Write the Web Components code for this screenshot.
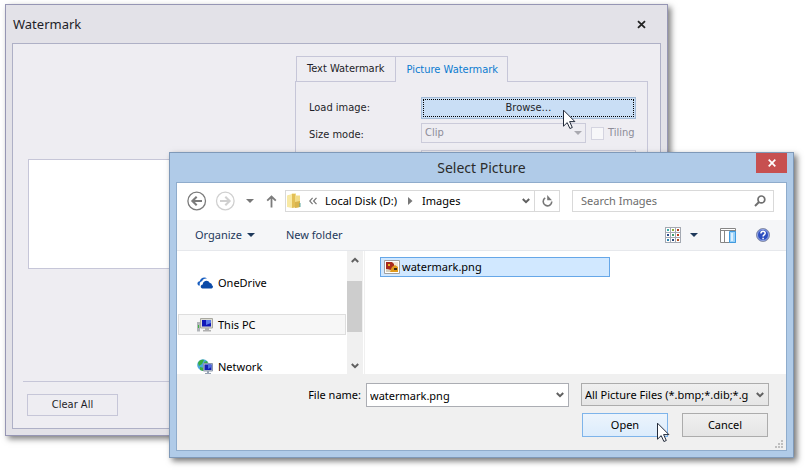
<!DOCTYPE html>
<html lang="en">
<head>
<meta charset="utf-8">
<title>Watermark</title>
<style>
  html, body { margin: 0; height: 100%; background: #fff; overflow: hidden; }
  body { position: relative; color: #000; font: 11px/16px "Noto Sans", "Open Sans", sans-serif; }
  watermark-window { position: absolute; inset: 4px 137px 34px 5px; }
  picture-dialog { position: absolute; inset: 152px 11px 12px 169px; }
  mouse-pointer.browse { left: 563px; top: 109px; }
  mouse-pointer.open { left: 657px; top: 422px; }
</style>
</head>
<body>
<watermark-window>
  <span slot="title">Watermark</span>
</watermark-window>
<mouse-pointer class="browse"></mouse-pointer>
<picture-dialog>
  <span slot="title">Select Picture</span>
</picture-dialog>
<mouse-pointer class="open"></mouse-pointer>

<script>
const base = `
  * { box-sizing: border-box; }
  button, input, select { font: inherit; color: inherit; margin: 0; padding: 0; border: 0; background: none; border-radius: 0; outline: 0; appearance: none; min-width: 0; }
  svg { display: block; flex: none; }
`;
function define(name, css, html) {
  const t = document.createElement('template');
  t.innerHTML = `<style>${base}${css}</style>${html}`;
  customElements.define(name, class extends HTMLElement {
    constructor() {
      super();
      this.attachShadow({ mode: 'open' }).append(t.content.cloneNode(true));
    }
  });
}

/* Arrow cursor drawn over the windows */
define('mouse-pointer', `:host { position: absolute; display: block; pointer-events: none; }`,
`<svg width="13" height="21" viewBox="0 0 13 21"><path d="M.5 1.2v16l3.7-3.6 2.7 5.9 2.4-1-2.7-5.9h5.3z" fill="#fff" stroke="#222a3a"/></svg>`);

/* Thin downward chevron of scroll bars and combo boxes; "up" flips it */
define('chevron-icon', `:host { display: block; color: #606060; } :host([up]) svg { transform: scaleY(-1); }`,
`<svg width="8" height="6" viewBox="0 0 8 6"><path d="M.8 1 4 4.2 7.2 1" fill="none" stroke="currentColor" stroke-width="2"/></svg>`);

/* Solid drop-down triangle */
define('drop-icon', `:host { display: block; }`,
`<svg width="8" height="4" viewBox="0 0 8 4"><path d="M0 0h8L4 4z" fill="currentColor"/></svg>`);

/* Tab page with its two tabs */
define('tab-box', `
  :host { display: flex; flex-direction: column; }
  .tabs { display: flex; margin-left: 1px; position: relative; z-index: 1; }
  .tabs button { height: 25px; padding: 0 11px 0 10px; border: 1px solid #c6c6d8; border-width: 1px 0 0 1px; }
  .tabs button[aria-selected=true] { height: 26px; padding: 0 9px 0 10px; border-right-width: 1px; color: #0a7bd0; background: #eeedf2; margin-bottom: -1px; }
  .page { flex: 1; border: 1px solid #c6c6d8; padding: 15px 11px 11px 13px; }`,
`<div class="tabs" role="tablist">
  <button role="tab" aria-selected="false">Text Watermark</button><button role="tab" aria-selected="true">Picture Watermark</button>
</div>
<div class="page" role="tabpanel"><slot></slot></div>`);

define('watermark-form', `
  :host { display: grid; grid-template-columns: 112px 1fr; grid-template-rows: 22px 23px 20px; row-gap: 4px; color: #1e1e28; }
  label { align-self: center; }
  .browse { background: #c9def5; border: 1px solid #a4bbd6; outline: 1px dotted #000; outline-offset: -3px; }
  .size { display: flex; gap: 5px; align-items: start; color: #8c8c98; }
  .pick { flex: 1; display: grid; align-items: center; }
  .pick > * { grid-area: 1 / 1; }
  .pick select { height: 20px; border: 1px solid #cbcbda; padding: 0 18px 0 3px; opacity: 1; color: #8c8c98; }
  .pick drop-icon { justify-self: end; margin-right: 4px; color: #a9a9b0; }
  .tile { display: flex; gap: 4px; align-items: center; height: 20px; width: 45px; }
  .tile input { flex: none; width: 13px; height: 13px; background: #f7f7f9; border: 1px solid #d4d4e0; }
  .extra { height: 20px; border: 1px solid #cbcbda; grid-column: 2; }`,
`<label for="b">Load image:</label><button id="b" class="browse">Browse…</button>
<label for="s">Size mode:</label>
<div class="size">
  <div class="pick"><select id="s" disabled><option>Clip</option></select><drop-icon></drop-icon></div>
  <div class="tile"><input type="checkbox" id="t" disabled><label for="t">Tiling</label></div>
</div>
<input class="extra" disabled aria-label="Alignment">`);

define('watermark-window', `
  :host { display: flex; flex-direction: column; background: #e3e2e8; border: 1px solid #9696b4; padding: 0 6px 6px; box-shadow: 3px 3px 6px rgba(0,0,0,.5); color: #1e1e28; font-family: "DejaVu Sans Condensed", "DejaVu Sans", sans-serif; }
  header { display: flex; align-items: center; justify-content: space-between; height: 38px; font: 13px/20px "Noto Sans", sans-serif; padding: 0 15px 0 1px; }
  .panel { flex: 1; min-height: 0; display: flex; flex-direction: column; background: #eeedf2; border: 1px solid #aeb0c6; padding: 12px 12px 0 10px; }
  .body { flex: 1; min-height: 0; display: flex; padding-bottom: 9px; }
  .view { flex: 0 0 272px; align-self: center; padding: 0 5px; }
  .sheet { height: 110px; background: #fff; border: 1px solid #c6c6d8; }
  tab-box { flex: 1; }
  footer { border-top: 1px solid #c6c6d8; padding: 12px 4px; }
  footer button { width: 91px; height: 22px; border: 1px solid #c6c6d8; display: block; }`,
`<header><slot name="title"></slot>
  <button aria-label="Close"><svg width="9" height="9" viewBox="0 0 9 9"><path d="M1 1.2 8 7.8M8 1.2 1 7.8" stroke="#222" stroke-width="1.8"/></svg></button>
</header>
<div class="panel">
  <div class="body">
    <div class="view"><div class="sheet"></div></div>
    <tab-box><watermark-form></watermark-form></tab-box>
  </div>
  <footer><button>Clear All</button></footer>
</div>`);

define('address-bar', `
  :host { display: flex; align-items: center; gap: 8px; height: 37px; padding: 0 12px 1px 10px; background: #fff; color: #000; }
  button { display: grid; place-items: center; height: 20px; }
  .round { width: 20px; } .small { width: 13px; }
  .small svg { overflow: visible; }
  .path { flex: 1; display: flex; align-items: center; gap: 8px; height: 22px; border: 1px solid #d9d9d9; padding-left: 1px; }
  .path .open { margin-left: auto; margin-right: -4px; }
  .path .reload { width: 25px; border-left: 1px solid #d9d9d9; }
  .find { flex: 0 0 202px; margin-left: 4px; display: flex; align-items: center; height: 22px; border: 1px solid #d9d9d9; padding: 0 7px 0 8px; }
  .find input { flex: 1; }
  input::placeholder { color: #6d6d6d; opacity: 1; }`,
`<button class="round" aria-label="Back"><svg width="20" height="20" viewBox="0 0 20 20" fill="none" stroke="#7b7b7b"><circle cx="9.7" cy="10" r="8.8" stroke-width="1.3"/><path d="M15 10H6M9.7 5.8 5.4 10l4.3 4.2" stroke-width="2.1"/></svg></button>
<button class="round" aria-label="Forward" disabled><svg width="20" height="20" viewBox="0 0 20 20" fill="none" stroke="#d0d0d0"><circle cx="10.3" cy="10" r="8.8" stroke-width="1.3"/><path d="M5 10h9M10.3 5.8l4.3 4.2-4.3 4.2" stroke-width="2.1"/></svg></button>
<button class="small" aria-label="Recent" style="color:#777"><drop-icon></drop-icon></button>
<button class="small" aria-label="Up"><svg width="11" height="13" viewBox="0 0 11 13" fill="none" stroke="#7c7c7c" stroke-width="1.8"><path d="M6.500 12.500V2M2.200 5.700 6.500 1.500 10.800 5.700"/></svg></button>
<div class="path">
  <svg width="14" height="16" viewBox="0 0 14 16"><path d="M1 2h3l1-1.500h4V14H1z" fill="#efd77c"/><path d="M0 2.500 5 1v14l-5-1z" fill="#f8e9a4"/><path d="M5 1h3v13.500l-3 .5z" fill="#e3bf56"/><path d="M8 2.500h5V14l-5 1z" fill="#f2dc88"/><path d="M8 9l5-1v6l-5 1z" fill="#d9b44c"/><path d="M13 10v4" stroke="#5ba7a0"/></svg>
  <svg width="8" height="8" viewBox="0 0 8 8" fill="none" stroke="#777" stroke-width="1.200"><path d="M3.600.8.700 4l2.900 3.200M7.500.8 4.600 4l2.900 3.200"/></svg>
  <button>Local Disk (D:)</button>
  <svg width="9" height="8" viewBox="0 0 9 8"><path d="M3 0l4.500 4L3 8z" fill="#777"/></svg>
  <button>Images</button>
  <button class="open" aria-label="Previous locations"><chevron-icon></chevron-icon></button>
  <button class="reload" aria-label="Refresh"><svg width="11" height="12" viewBox="0 0 11 12"><path d="M3.200 2.900A4.300 4.300 0 1 0 9.800 6.500" fill="none" stroke="#777" stroke-width="1.600"/><path d="M5.200 0v5.200H10L8.300 3.500z" fill="#777"/></svg></button>
</div>
<div class="find"><input type="search" placeholder="Search Images" aria-label="Search Images">
  <svg width="12" height="12" viewBox="0 0 12 12" fill="none" stroke="#6f6f6f"><circle cx="7.400" cy="4.400" r="3.400" stroke-width="1.700"/><path d="M5 7 1 11" stroke-width="2"/></svg></div>`);

define('command-bar', `
  :host { display: flex; align-items: center; height: 31px; padding: 0 16px 0 18px; background: #f5f6f8; border-bottom: 1px solid #e6e8ec; color: #1e395b; }
  button { display: flex; align-items: center; gap: 5px; height: 28px; }
  .new { margin-left: 31px; margin-right: auto; }
  .drop { margin: 0 22px 0 9px; }
  .help { margin-left: 20px; }`,
`<button>Organize <drop-icon></drop-icon></button>
<button class="new">New folder</button>
<button aria-label="Change view"><svg width="16" height="16" viewBox="0 0 16 16">
  <path d="M0 0h16v16H0z" fill="#a4a9b2"/>
  <path d="M1 1h4v4H1zM6 1h4v4H6zM11 1h4v4h-4zM1 6h4v4H1zM6 6h4v4H6zM11 6h4v4h-4zM1 11h4v4H1zM6 11h4v4H6zM11 11h4v4h-4z" fill="#fff"/>
  <path d="M2 2h2v2H2z" fill="#3caaa8"/><path d="M7 2h2v2H7z" fill="#8fae3c"/><path d="M12 2h2v2h-2z" fill="#b04020"/>
  <path d="M2 7h2v2H2z" fill="#2c4c8c"/><path d="M7 7h2v2H7z" fill="#3c9c6c"/><path d="M12 7h2v2h-2z" fill="#b8401c"/>
  <path d="M2 12h2v2H2z" fill="#2c84b0"/><path d="M7 12h2v2H7z" fill="#284878"/><path d="M12 12h2v2h-2z" fill="#b05020"/></svg></button>
<button class="drop" aria-label="More views"><drop-icon></drop-icon></button>
<button aria-label="Preview pane"><svg width="16" height="15" viewBox="0 0 16 15"><path d="M.5.5h15v14H.5z" fill="#fff" stroke="#868686"/><path d="M0 2.500h16M4.500 3v12" stroke="#868686"/><path d="M9.500 3.500h6v11h-6z" fill="#9cd2f8" stroke="#3f9be0"/><path d="M11 5h2v8h-2z" fill="#dcf0fe"/></svg></button>
<button class="help" aria-label="Help"><svg width="14" height="14" viewBox="0 0 14 14"><circle cx="7" cy="7" r="6.500" fill="#2d4fc0" stroke="#8d93a6"/><circle cx="7" cy="7" r="5.500" fill="none" stroke="#b4c2ee" stroke-width=".800"/><path d="M4.900 5.600c0-3 4.400-2.900 4.300-.3C9.200 6.900 7.100 6.800 7.100 8.500M7.100 9.700v1.500" fill="none" stroke="#fff" stroke-width="1.500"/></svg></button>`);

define('place-item', `
  :host { display: flex; align-items: center; gap: 5px; flex: none; height: 21px; margin: 0 1px; padding-left: 18px; border: 1px solid transparent; }
  :host([current]) { background: #f7f7f7; border-color: #dedede; }
  ::slotted(svg) { display: block; }`,
`<slot name="icon"></slot><slot></slot>`);

define('scroll-strip', `
  :host { display: flex; flex-direction: column; align-items: center; width: 16px; background: #f0f0f0; padding: 6px 0 5px; }
  .thumb { width: 15px; height: 51px; margin: 18px 1px 0 0; background: #cdcdcd; }
  .down { margin-top: auto; }`,
`<chevron-icon up></chevron-icon><div class="thumb"></div><chevron-icon class="down"></chevron-icon>`);

define('file-item', `
  :host { display: flex; align-items: center; gap: 2px; width: 230px; height: 20px; padding-left: 3px; background: #d1e8ff; border: 1px solid #66a7e8; }`,
`<svg width="16" height="14" viewBox="0 0 16 14"><path d="M.5.5h15v13H.5z" fill="#fff" stroke="#a0a0a0"/><path d="M2 2h12v10H2z" fill="#f0e4d4"/><path d="M2 2h6l2 2v4l-3 2-5-1z" fill="#a92a1c"/><path d="M4 4h2v2H4z" fill="#e8b428"/><path d="M8 7l3-2 3 2v5H6l1-3z" fill="#e09a1c"/><path d="M10 8h3v2h-3z" fill="#3c2a14"/><path d="M2 9l4 1v2H2z" fill="#d8ceb8"/></svg><slot></slot>`);

define('dialog-footer', `
  :host { display: grid; grid-template-columns: 184px 1fr 188px; grid-template-rows: 24px 24px; row-gap: 6px; padding: 9px 17px 13px 0; background: #f0f0f0; position: relative; }
  label { justify-self: end; align-self: center; }
  .name { margin: 0 12px 0 5px; display: flex; align-items: center; background: #fff; border: 1px solid #abadb3; padding: 0 4px 0 3px; }
  .name input { flex: 1; padding-top: 2px; }
  .type { display: grid; height: 23px; align-items: center; }
  .type > * { grid-area: 1 / 1; }
  .type select { width: 100%; height: 23px; background: linear-gradient(#f0f0f0, #e5e5e5); border: 1px solid #acacac; padding: 0 19px 0 3px; overflow: hidden; }
  .type chevron-icon { justify-self: end; margin-right: 5px; }
  .actions { grid-column: 3; display: flex; gap: 14px; padding: 0 1px; }
  .actions button { flex: 1; background: linear-gradient(#f0f0f0, #e5e5e5); border: 1px solid #acacac; }
  .actions .ok { background: linear-gradient(#ecf4fc, #dcecfc); border-color: #7eb4ea; }
  .grip { position: absolute; right: 3px; bottom: 2px; }`,
`<label for="n">File name:</label>
<div class="name"><input id="n" value="watermark.png"><button aria-label="Show names"><chevron-icon></chevron-icon></button></div>
<div class="type"><select aria-label="File type"><option>All Picture Files (*.bmp;*.dib;*.gif;*.jpg)</option></select><chevron-icon></chevron-icon></div>
<div class="actions"><button class="ok">Open</button><button>Cancel</button></div>
<svg class="grip" width="8" height="8" viewBox="0 0 8 8"><path d="M6 0h2v2H6zM3 3h2v2H3zM6 3h2v2H6zM0 6h2v2H0zM3 6h2v2H3zM6 6h2v2H6z" fill="#bfbfbf"/></svg>`);

define('picture-dialog', `
  :host { display: flex; flex-direction: column; background: #b0cbe8; border: 1px solid #7f99b8; padding: 0 6px 6px; box-shadow: 3px 3px 6px rgba(0,0,0,.55); }
  header { display: grid; grid-template-columns: 1fr auto 1fr; height: 29px; font-size: 14px; line-height: 29px; color: #2b2b2b; }
  header slot { display: block; grid-column: 2; }
  header button { grid-column: 3; justify-self: end; width: 31px; height: 20px; background: #c75050; display: grid; place-items: center; }
  .client { flex: 1; min-height: 0; display: flex; flex-direction: column; border: 1px solid #8faccc; background: #fff; }
  .split { flex: 1; min-height: 0; display: flex; overflow: hidden; }
  nav { flex: 0 0 170px; display: flex; flex-direction: column; gap: 21px; padding-top: 21px; overflow: hidden; }
  .files { flex: 1; margin-left: 1px; border-left: 1px solid #f0f0f0; padding: 6px 15px; }`,
`<header><slot name="title"></slot><button aria-label="Close"><svg width="8" height="8" viewBox="0 0 8 8"><path d="M.700.700l6.600 6.600M7.300.700.700 7.300" stroke="#fff" stroke-width="1.700"/></svg></button></header>
<div class="client">
  <address-bar></address-bar>
  <command-bar></command-bar>
  <div class="split">
    <nav>
      <place-item><svg slot="icon" width="16" height="12" viewBox="0 0 16 12"><path d="M1.500 8.500C-.5 7 .5 4.500 2.700 4.300 3.500 1 7.500-.8 10.300 1.700c-3-.4-4.300.6-5.200 2.500C3 4.500 2.300 6.500 3 8.500z" fill="#1a5fc0"/><path d="M5.500 11.500C3 11 3.200 7.600 5.700 7.400 6 3.600 11 2.300 12.800 6 15 6 15 8 14.800 8.300c1.700.5 1.500 3-.3 3.200z" fill="#0a49a8"/></svg>OneDrive</place-item>
      <place-item current><svg slot="icon" width="16" height="14" viewBox="0 0 16 14"><path d="M0 4h3v9.500H0z" fill="#b0b4b8"/><path d="M1 7h1v3H1z" fill="#3cb43c"/><path d="M3.500.5h12v9.500h-12z" fill="#dcdcd4" stroke="#a8a8a0"/><path d="M5 2h9v6.500H5z" fill="#1018b8"/><path d="M9 2h5v3L9 7z" fill="#5a78e8"/><path d="M8 10h4v2h2v1.500H6V12h2z" fill="#b0b0b0"/></svg>This PC</place-item>
      <place-item><svg slot="icon" width="16" height="16" viewBox="0 0 16 16"><circle cx="6" cy="6" r="5.800" fill="#4aa8dc"/><path d="M1 4c1-3 4-4 6-3L5 5 2 7zM7 3l3-1 1 3H8zM3 8l4 1-1 3-3-1z" fill="#3cae3c"/><path d="M6.500 4.500h9v7.500h-9z" fill="#c4ccd8" stroke="#8c98ac"/><path d="M7.500 5.500h7V11h-7z" fill="#1420b4"/><path d="M11 5.500h3.500V8L11 10z" fill="#4c6ce0"/><path d="M10 12h2v2h2v1.500H8V14h2z" fill="#98a4b4"/></svg>Network</place-item>
    </nav>
    <scroll-strip></scroll-strip>
    <div class="files"><file-item>watermark.png</file-item></div>
  </div>
  <dialog-footer></dialog-footer>
</div>`);
</script>
</body>
</html>
